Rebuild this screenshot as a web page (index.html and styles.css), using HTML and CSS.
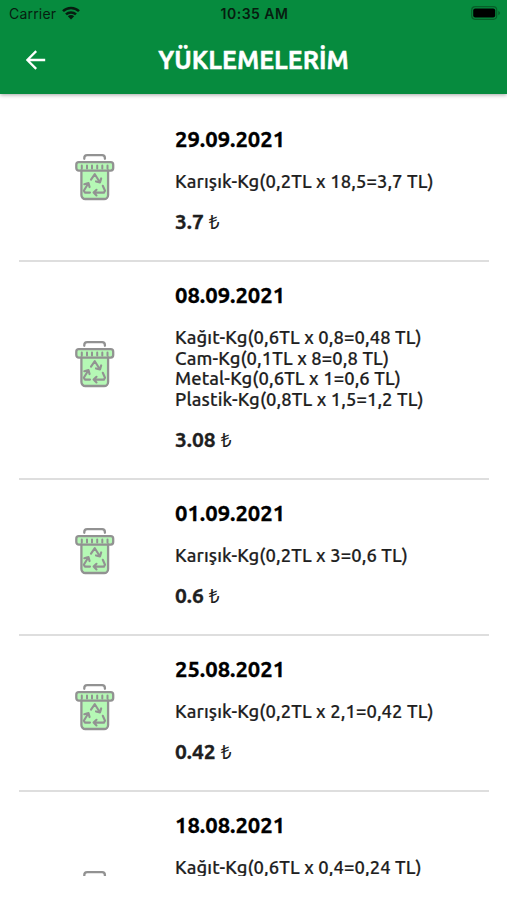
FILE: index.html
```html
<!DOCTYPE html>
<html lang="tr">
<head>
<meta charset="utf-8">
<title>Yüklemelerim</title>
<link rel="stylesheet" href="styles.css">
</head>
<body>
<svg width="0" height="0" class="defs" aria-hidden="true">
  <symbol id="bin" viewBox="0 0 40 48">
    <path d="M6.5 17.5h27V42a4 4 0 0 1-4 4h-19a4 4 0 0 1-4-4z" fill="#b5f8b5"/>
    <rect x="1.3" y="9.2" width="36.9" height="8.4" rx="2.5" fill="#b5f8b5"/>
    <g fill="none" stroke="#929292" stroke-width="2.3" stroke-linecap="round" stroke-linejoin="round">
      <path d="M9.3 5.8V5a2.8 2.8 0 0 1 2.8-2.8h15a2.8 2.8 0 0 1 2.8 2.8v.8"/>
      <rect x="1.3" y="9.2" width="36.9" height="8.4" rx="2.5"/>
      <path d="M6.4 17.5V42a4 4 0 0 0 4 4h18.7a4 4 0 0 0 4-4V17.5"/>
      <path d="M6.8 12.4v3M12 12.4v3M17 12.4v3M22.2 12.4v3M27.3 12.4v3M32.5 12.4v3" stroke-width="2"/>
      <g stroke-width="2.1">
        <path d="M16 26.6l3.8-5.4 4.9 7.8M26.2 25.4l-1.2 4-4-1"/>
        <path d="M27.8 32.8l2.2 4.9-1.1 1.9H19M21.5 36.8l-2.9 2.8 2.9 2.8"/>
        <path d="M15 39.6h-5l-1.2-1.9 4.6-7.5M9.3 31.2l4.2-1.1 1.1 4"/>
      </g>
    </g>
  </symbol>
</svg>
<header class="header">
  <div class="status">
    <div class="carrier"><span>Carrier</span>
      <svg class="wifi" viewBox="0 0 18 14"><g fill="none" stroke="#071d10" stroke-width="2.5"><path d="M1 5.2a11.5 11.5 0 0 1 16 0M4 8.4a7.2 7.2 0 0 1 10 0"/></g><path d="M5.8 10.3a4.6 4.6 0 0 1 6.4 0L9 13.5z" fill="#071d10"/></svg>
    </div>
    <div class="time">10:35 AM</div>
    <svg class="battery" viewBox="0 0 30 14"><rect x=".7" y=".7" width="25" height="12.6" rx="3.5" fill="none" stroke="#075f29" stroke-width="1.2"/><rect x="2.2" y="2.4" width="22" height="9.2" rx="2" fill="#000"/><path d="M27.3 4.7q3.5 2.3 0 4.6z" fill="#075f29"/></svg>
  </div>
  <div class="bar">
    <svg class="back" viewBox="0 0 20 20"><path d="M19.2 10H1.5M10.2 1.1L1.3 10l8.9 8.9" fill="none" stroke="#fff" stroke-width="2.3"/></svg>
    <h1 class="title">YÜKLEMELERİM</h1>
  </div>
</header>
<main class="list">
  <article class="item">
    <svg class="bin"><use href="#bin"/></svg>
    <div class="info"><h2 class="date">29.09.2021</h2><p class="lines">Karışık-Kg(0,2TL x 18,5=3,7 TL)</p><p class="total">3.7 <span class="lira">₺</span></p></div>
  </article>
  <article class="item">
    <svg class="bin"><use href="#bin"/></svg>
    <div class="info"><h2 class="date">08.09.2021</h2><p class="lines">Kağıt-Kg(0,6TL x 0,8=0,48 TL)<br>Cam-Kg(0,1TL x 8=0,8 TL)<br>Metal-Kg(0,6TL x 1=0,6 TL)<br>Plastik-Kg(0,8TL x 1,5=1,2 TL)</p><p class="total">3.08 <span class="lira">₺</span></p></div>
  </article>
  <article class="item">
    <svg class="bin"><use href="#bin"/></svg>
    <div class="info"><h2 class="date">01.09.2021</h2><p class="lines">Karışık-Kg(0,2TL x 3=0,6 TL)</p><p class="total">0.6 <span class="lira">₺</span></p></div>
  </article>
  <article class="item">
    <svg class="bin"><use href="#bin"/></svg>
    <div class="info"><h2 class="date">25.08.2021</h2><p class="lines">Karışık-Kg(0,2TL x 2,1=0,42 TL)</p><p class="total">0.42 <span class="lira">₺</span></p></div>
  </article>
  <article class="item item-partial">
    <svg class="bin"><use href="#bin"/></svg>
    <div class="info"><h2 class="date">18.08.2021</h2><p class="lines">Kağıt-Kg(0,6TL x 0,4=0,24 TL)</p></div>
  </article>
</main>
</body>
</html>
```
FILE: styles.css
```css
* { box-sizing: border-box; }
body { margin: 0; height: 900px; overflow: hidden; background: #fff; font-family: Ubuntu, "Noto Sans", sans-serif; color: #1f1f1f; }
h1, h2, p { margin: 0; }
.defs { display: block; height: 0; }
.header { position: relative; height: 94px; background: #068b3e; box-shadow: 0 1px 4px rgba(0, 0, 0, .35); }
.status { display: grid; grid-template-columns: 1fr auto 1fr; align-items: center; height: 26px; padding: 0 7px 0 9px; font-family: Inter, sans-serif; color: #071d10; }
.carrier { display: flex; align-items: center; gap: 6px; font-size: 14px; letter-spacing: .2px; }
.wifi { width: 18px; height: 14px; }
.time { font-size: 14px; font-weight: 600; letter-spacing: .5px; }
.battery { width: 30px; height: 14px; justify-self: end; margin-right: -1px; }
.bar { display: grid; grid-template-columns: 60px 1fr 60px; align-items: center; height: 67px; }
.back { width: 20px; height: 20px; margin-left: 25.5px; }
.title { padding-top: 1px; text-align: center; font-size: 25px; line-height: 30px; font-weight: 700; color: #fff; white-space: nowrap; -webkit-text-stroke: .4px #fff; }
.list { height: 782px; padding: 12px 18px 0 19px; overflow: hidden; }
.item { display: grid; grid-template-columns: 156px 1fr; align-items: center; height: 156px; border-bottom: 2px solid #dedede; }
.item:nth-child(2) { height: 218px; }
.item-partial { height: 218px; align-items: start; }
.bin { width: 40px; height: 48px; margin: 0 0 12px 56px; }
.item-partial .bin { margin-top: 78px; }
.info { align-self: start; padding-top: 19px; white-space: nowrap; }
.date { font-size: 22px; line-height: 28px; font-weight: 700; color: #000; -webkit-text-stroke: .3px #000; }
.lines { margin-top: 18px; font-size: 18.4px; line-height: 20.7px; font-weight: 500; letter-spacing: .13px; -webkit-text-stroke: .2px #1f1f1f; }
.total { margin-top: 15px; font-size: 21px; line-height: 28px; font-weight: 700; -webkit-text-stroke: .3px #1f1f1f; }
.lira { font-size: 19px; font-weight: 400; -webkit-text-stroke: 0; }
```
